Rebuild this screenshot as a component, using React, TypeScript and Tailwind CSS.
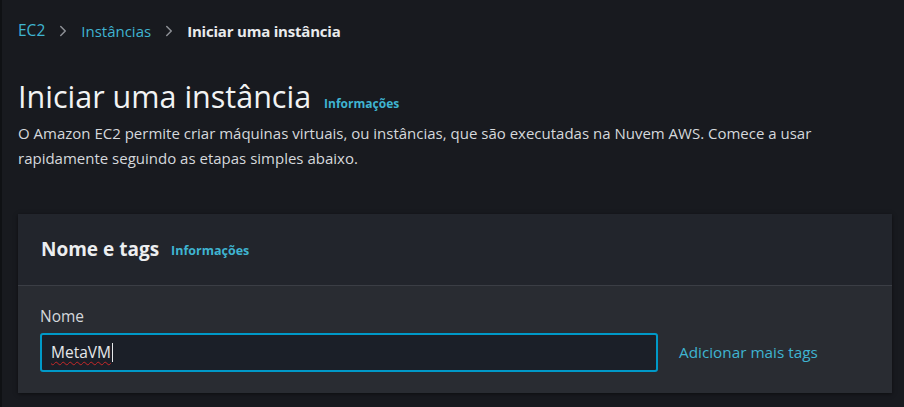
import { ChevronRight } from "lucide-react";

export default function App() {
  return (
    <div
      className="w-[904px] h-[407px] overflow-hidden bg-[#181a1f] border-l-2 border-[#0f1114] text-[#d1d5db]"
      style={{ fontFamily: '"Open Sans", "Noto Sans", sans-serif' }}
    >
      {/* Breadcrumb */}
      <nav className="flex items-center h-[62px] pl-[16px] text-[15px]">
        <a className="text-[#3fb4d1] text-[15.5px]">EC2</a>
        <ChevronRight className="w-[18px] h-[18px] mx-[9px] text-[#8d9096]" strokeWidth={2} />
        <a className="text-[#3fb4d1]">Instâncias</a>
        <ChevronRight className="w-[18px] h-[18px] mx-[9px] text-[#8d9096]" strokeWidth={2} />
        <span className="font-bold text-[#e9ebed] tracking-[-0.2px]">Iniciar uma instância</span>
      </nav>

      {/* Header */}
      <div className="pl-[16px] pt-[14px]">
        <div className="flex items-baseline gap-[13px]">
          <h1 className="text-[30.5px] leading-[40px] text-[#f2f3f3]">Iniciar uma instância</h1>
          <a className="text-[12px] font-bold text-[#3fb4d1]">Informações</a>
        </div>
        <p className="mt-[5px] text-[15px] leading-[25px] max-w-[830px] text-[#d5d8dc]">
          O Amazon EC2 permite criar máquinas virtuais, ou instâncias, que são executadas na Nuvem AWS. Comece a usar
          rapidamente seguindo as etapas simples abaixo.
        </p>
      </div>

      {/* Panel */}
      <section className="ml-[16px] mr-[12px] mt-[43px] shadow-[0_1px_4px_rgba(0,0,0,0.5)]">
        <div className="h-[72px] bg-[#22252c] flex items-center pl-[23px] gap-[12px] border-b border-[#3b3e45]">
          <h2 className="text-[19px] font-bold text-[#eceef0]">Nome e tags</h2>
          <a className="text-[12.5px] font-bold text-[#3fb4d1] mt-[3px]">Informações</a>
        </div>
        <div className="bg-[#292c32] h-[107px] pl-[22px] pt-[19px]">
          <label className="block text-[15.5px] text-[#d5d8dc] leading-[22px]">Nome</label>
          <div className="flex items-center mt-[6px]">
            <div className="w-[618px] h-[39px] rounded-[3px] border-2 border-[#0099c8] bg-[#1b1f28] flex items-center pl-[9px]">
              <span className="text-[15.5px] text-[#e6e8eb] underline decoration-wavy decoration-[#c62828] decoration-1 underline-offset-[3px]">
                MetaVM
              </span>
              <span className="w-[1px] h-[19px] bg-[#e6e8eb] ml-[1px]" />
            </div>
            <a className="ml-[21px] text-[15.3px] text-[#3fb4d1]">Adicionar mais tags</a>
          </div>
        </div>
      </section>
    </div>
  );
}
